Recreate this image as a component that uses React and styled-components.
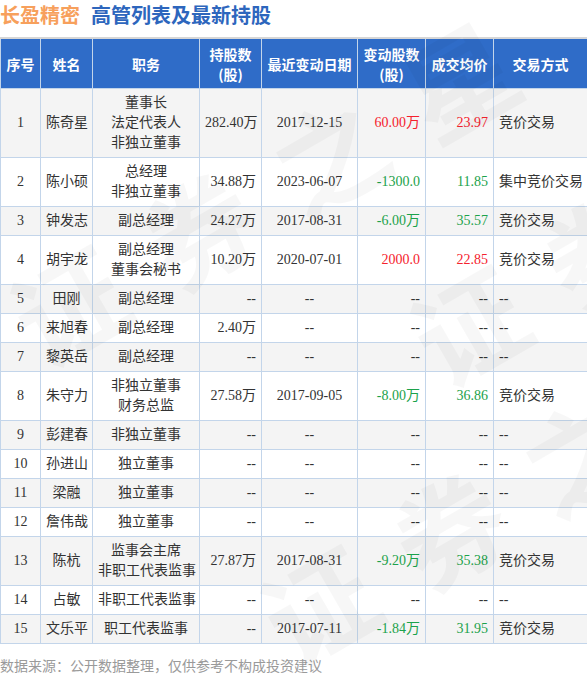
import React from "react";
import styled, { createGlobalStyle } from "styled-components";

const GlobalStyle = createGlobalStyle`
  html, body { margin: 0; padding: 0; background: #ffffff; }
  body { font-family: "Liberation Serif", "Noto Sans CJK SC", serif; color: #333; }
`;

const Page = styled.div`
  position: relative;
  width: 587px;
  overflow: hidden;
`;

const Title = styled.div`
  display: flex;
  align-items: center;
  gap: 11px;
  height: 30px;
  margin-bottom: 7px;
  font-family: "Noto Sans CJK SC", sans-serif;
  font-size: 20px;
  font-weight: 700;
  line-height: 30px;
`;

const Brand = styled.span`
  color: #f7a05c;
`;

const Heading = styled.span`
  color: #2d66bd;
`;

const Table = styled.table`
  width: 587px;
  table-layout: fixed;
  border-collapse: collapse;
  border-top: 2px solid #d6d6d6;
  font-size: 14px;
  line-height: 20px;
`;

const Th = styled.th`
  background: #2f6cc8;
  color: #ffffff;
  font-family: "Noto Sans CJK SC", sans-serif;
  font-weight: 700;
  font-size: 14px;
  padding: 5px 2px 4px;
  border: 1px solid #c3d5ea;
  border-top: none;
  text-align: center;
  vertical-align: middle;
`;

const Row = styled.tr`
  background: ${(p) => (p.$odd ? "#f4f4f4" : "#ffffff")};
`;

const Td = styled.td`
  padding: 4px 5px;
  height: 20px;
  border: 1px solid #c3d5ea;
  vertical-align: middle;
  text-align: ${(p) => p.$align || "center"};
  color: ${(p) =>
    p.$tone === "up" ? "#f5222d" : p.$tone === "down" ? "#1ca24b" : "#333333"};
  white-space: nowrap;
`;

const Line = styled.div``;

const Footer = styled.div`
  margin-top: 11px;
  font-family: "Noto Sans CJK SC", sans-serif;
  font-size: 14px;
  line-height: 20px;
  color: #9a9a9a;
`;

const Watermark = styled.div`
  position: absolute;
  left: ${(p) => p.$x}px;
  top: ${(p) => p.$y}px;
  font-family: "Noto Sans CJK SC", sans-serif;
  font-size: 110px;
  font-weight: 700;
  letter-spacing: 40px;
  color: rgba(0, 0, 0, 0.03);
  transform: rotate(-30deg);
  transform-origin: left top;
  white-space: nowrap;
  pointer-events: none;
`;

const cols = [40, 52, 107, 62, 96, 68, 68, 94];

const rows = [
  ["1", "陈奇星", ["董事长", "法定代表人", "非独立董事"], "282.40万", "2017-12-15", "60.00万", "23.97", "竞价交易", "up"],
  ["2", "陈小硕", ["总经理", "非独立董事"], "34.88万", "2023-06-07", "-1300.0", "11.85", "集中竞价交易", "down"],
  ["3", "钟发志", ["副总经理"], "24.27万", "2017-08-31", "-6.00万", "35.57", "竞价交易", "down"],
  ["4", "胡宇龙", ["副总经理", "董事会秘书"], "10.20万", "2020-07-01", "2000.0", "22.85", "竞价交易", "up"],
  ["5", "田刚", ["副总经理"], "--", "--", "--", "--", "--", ""],
  ["6", "来旭春", ["副总经理"], "2.40万", "--", "--", "--", "--", ""],
  ["7", "黎英岳", ["副总经理"], "--", "--", "--", "--", "--", ""],
  ["8", "朱守力", ["非独立董事", "财务总监"], "27.58万", "2017-09-05", "-8.00万", "36.86", "竞价交易", "down"],
  ["9", "彭建春", ["非独立董事"], "--", "--", "--", "--", "--", ""],
  ["10", "孙进山", ["独立董事"], "--", "--", "--", "--", "--", ""],
  ["11", "梁融", ["独立董事"], "--", "--", "--", "--", "--", ""],
  ["12", "詹伟哉", ["独立董事"], "--", "--", "--", "--", "--", ""],
  ["13", "陈杭", ["监事会主席", "非职工代表监事"], "27.87万", "2017-08-31", "-9.20万", "35.38", "竞价交易", "down"],
  ["14", "占敏", ["非职工代表监事"], "--", "--", "--", "--", "--", ""],
  ["15", "文乐平", ["职工代表监事"], "--", "2017-07-11", "-1.84万", "31.95", "竞价交易", "down"],
];

const headers = [
  ["序号"],
  ["姓名"],
  ["职务"],
  ["持股数", "(股)"],
  ["最近变动日期"],
  ["变动股数", "(股)"],
  ["成交均价"],
  ["交易方式"],
];

export default function App() {
  return (
    <Page>
      <GlobalStyle />
      <Title>
        <Brand>长盈精密</Brand>
        <Heading>高管列表及最新持股</Heading>
      </Title>
      <Table>
        <colgroup>
          {cols.map((w, i) => (
            <col key={i} style={{ width: w }} />
          ))}
        </colgroup>
        <thead>
          <tr>
            {headers.map((h, i) => (
              <Th key={i}>
                {h.map((l, j) => (
                  <Line key={j}>{l}</Line>
                ))}
              </Th>
            ))}
          </tr>
        </thead>
        <tbody>
          {rows.map((r, i) => (
            <Row key={r[0]} $odd={i % 2 === 0}>
              <Td>{r[0]}</Td>
              <Td>{r[1]}</Td>
              <Td>
                {r[2].map((l, j) => (
                  <Line key={j}>{l}</Line>
                ))}
              </Td>
              <Td $align="right">{r[3]}</Td>
              <Td>{r[4]}</Td>
              <Td $align="right" $tone={r[8]}>{r[5]}</Td>
              <Td $align="right" $tone={r[8]}>{r[6]}</Td>
              <Td $align="left">{r[7]}</Td>
            </Row>
          ))}
        </tbody>
      </Table>
      <Footer>数据来源：公开数据整理，仅供参考不构成投资建议</Footer>
      <Watermark $x={-20} $y={260}>证券之星</Watermark>
      <Watermark $x={230} $y={560}>证券之星</Watermark>
      <Watermark $x={380} $y={280}>证券之星</Watermark>
    </Page>
  );
}
